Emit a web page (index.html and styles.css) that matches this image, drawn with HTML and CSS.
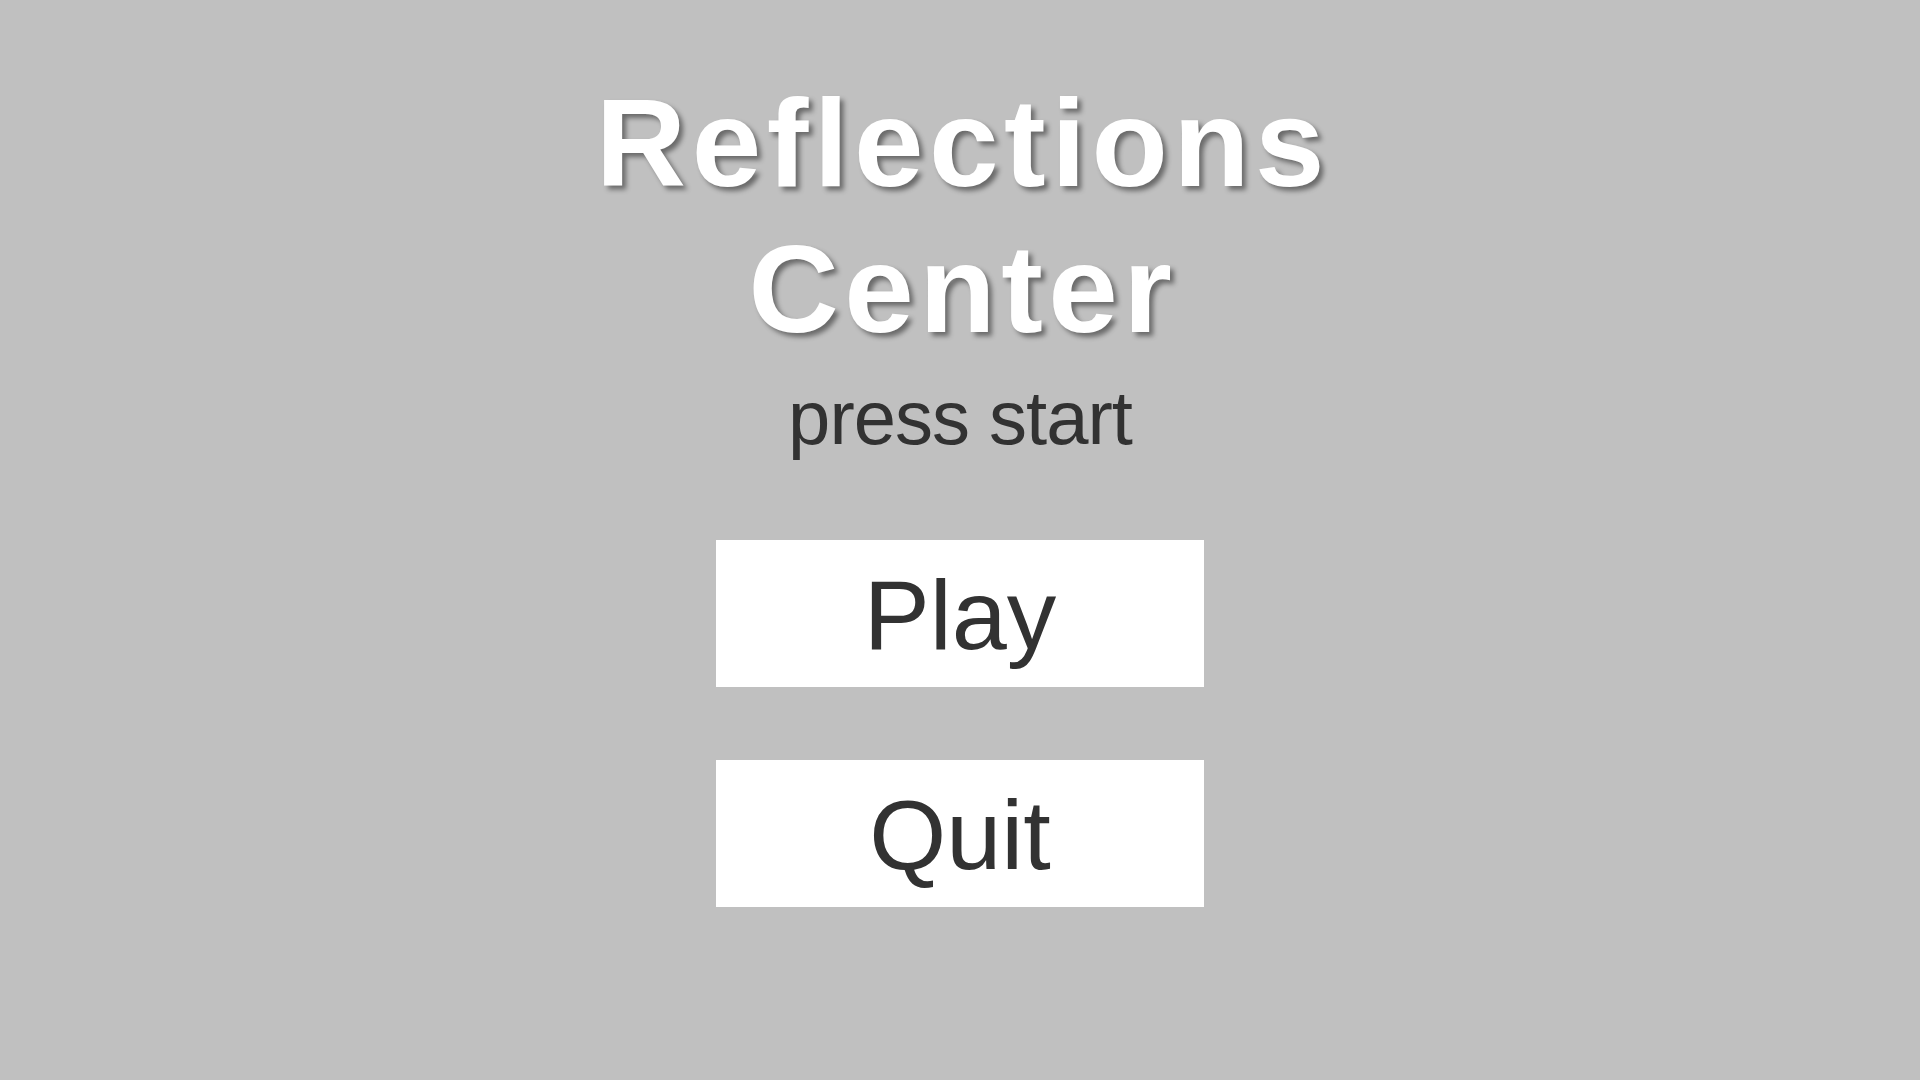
FILE: index.html
```html
<!DOCTYPE html>
<html>
  <head>
    <meta charset="UTF-8" />
    <meta name="viewport" content="width=device-width, initial-scale=1.0" />
    <title>Reflections Center</title>
    <link rel="stylesheet" href="styles.css">
  </head>
  <body>
    <div class="menu">
      <h1 class="title">Reflections<br>Center</h1>
      <p class="subtitle">press start</p>

      <div class="buttons">
        <button class="menu-btn">Play</button>
        <button class="menu-btn">Quit</button>
      </div>
    </div>
  </body>
</html>
```

FILE: styles.css
```css
* {
  margin: 0;
  padding: 0;
  box-sizing: border-box;
}

body {
  width: 1920px;
  height: 1080px;
  background-color: #c0c0c0;
  font-family: "Liberation Sans", Arial, sans-serif;
  color: #323232;
  overflow: hidden;
}

.menu {
  display: flex;
  flex-direction: column;
  align-items: center;
  padding-top: 70px;
}

.title {
  font-size: 125px;
  font-weight: bold;
  line-height: 146px;
  letter-spacing: 5.5px;
  padding-left: 6px;
  text-align: center;
  color: #ffffff;
  text-shadow: 4px 4px 5px rgba(0, 0, 0, 0.45);
}

.subtitle {
  margin-top: 16px;
  font-size: 76px;
  line-height: 80px;
  letter-spacing: -1px;
  text-align: center;
}

.buttons {
  margin-top: 82px;
  display: flex;
  flex-direction: column;
  gap: 73px;
}

.menu-btn {
  width: 488px;
  height: 147px;
  padding-top: 2px;
  background-color: #ffffff;
  border: none;
  font-family: "Liberation Sans", Arial, sans-serif;
  font-size: 99px;
  line-height: 145px;
  color: #323232;
  cursor: pointer;
}
```
